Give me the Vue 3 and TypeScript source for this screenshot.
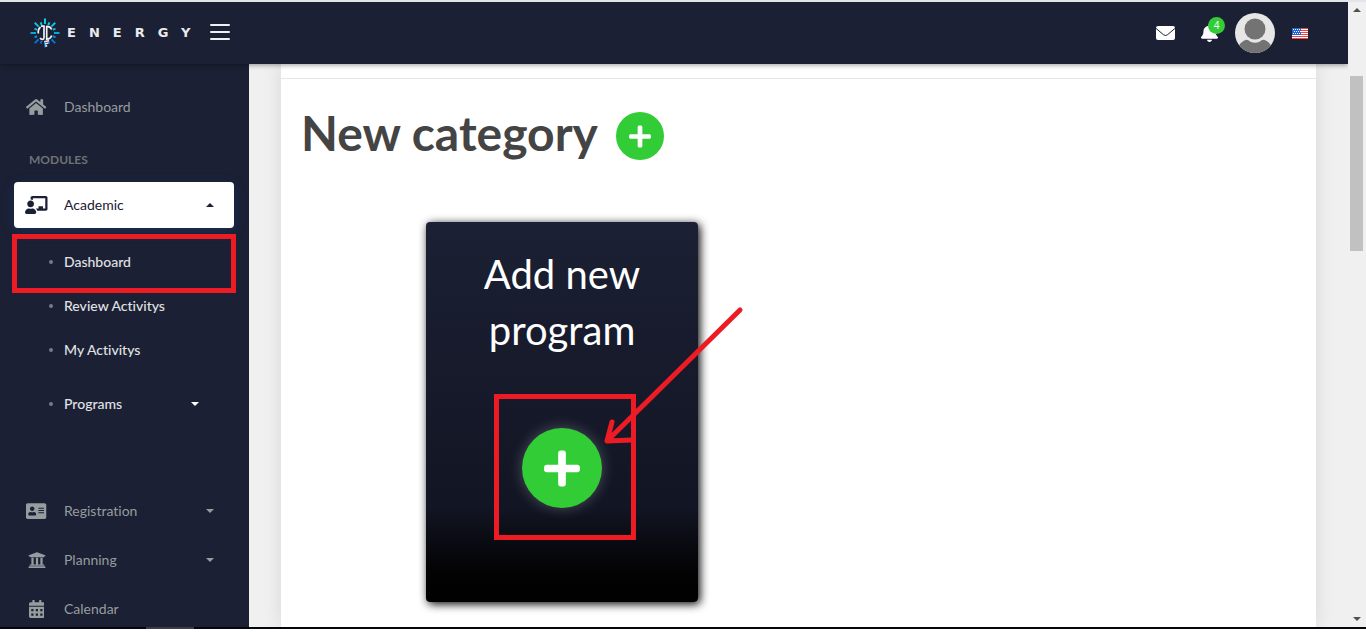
<script setup lang="ts">
interface NavItem {
  label: string
  icon: string
  box: string
  size: number
  arrow?: boolean
}

const icons = {
  home: 'M280.37 148.26L96 300.11V464a16 16 0 0 0 16 16l112.06-.29a16 16 0 0 0 15.92-16V368a16 16 0 0 1 16-16h64a16 16 0 0 1 16 16v95.64a16 16 0 0 0 16 16.05L464 480a16 16 0 0 0 16-16V300L295.67 148.26a12.19 12.19 0 0 0-15.3 0zM571.6 251.47L488 182.56V44.05a12 12 0 0 0-12-12h-56a12 12 0 0 0-12 12v72.61L318.47 43a48 48 0 0 0-61 0L4.34 251.47a12 12 0 0 0-1.6 16.9l25.5 31A12 12 0 0 0 45.15 301l235.22-193.74a12.19 12.19 0 0 1 15.3 0L530.9 301a12 12 0 0 0 16.9-1.6l25.5-31a12 12 0 0 0-1.7-16.93z',
  teacher: 'M208 352c-2.39 0-4.78.35-7.06 1.09C187.98 357.3 174.35 360 160 360c-14.35 0-27.98-2.7-40.95-6.91-2.28-.74-4.66-1.09-7.05-1.09C49.94 352-.33 402.48 0 464.62.14 490.88 21.73 512 48 512h224c26.27 0 47.86-21.12 48-47.38.33-62.14-49.94-112.62-112-112.62zm-48-32c53.02 0 96-42.98 96-96s-42.98-96-96-96-96 42.98-96 96 42.98 96 96 96zM592 0H208c-26.47 0-48 22.25-48 49.59V96c23.42 0 45.1 6.78 64 17.8V64h352v288h-64v-64H384v64h-76.24c19.1 16.69 33.12 38.73 39.69 64H592c26.47 0 48-22.25 48-49.59V49.59C640 22.25 618.47 0 592 0z',
  card: 'M528 32H48C21.5 32 0 53.5 0 80v352c0 26.5 21.5 48 48 48h480c26.5 0 48-21.5 48-48V80c0-26.5-21.5-48-48-48zm-352 96c35.3 0 64 28.7 64 64s-28.7 64-64 64-64-28.7-64-64 28.7-64 64-64zm112 236.8c0 10.6-10 19.2-22.4 19.2H86.4C74 384 64 375.4 64 364.8v-19.2c0-31.8 30.1-57.6 67.2-57.6h5c12.3 5.1 25.7 8 39.8 8s27.6-2.9 39.8-8h5c37.1 0 67.2 25.8 67.2 57.6v19.2zM512 312c0 4.4-3.6 8-8 8H360c-4.4 0-8-3.6-8-8v-16c0-4.4 3.6-8 8-8h144c4.4 0 8 3.6 8 8v16zm0-64c0 4.4-3.6 8-8 8H360c-4.4 0-8-3.6-8-8v-16c0-4.4 3.6-8 8-8h144c4.4 0 8 3.6 8 8v16zm0-64c0 4.4-3.6 8-8 8H360c-4.4 0-8-3.6-8-8v-16c0-4.4 3.6-8 8-8h144c4.4 0 8 3.6 8 8v16z',
  bank: 'M496 128v16a8 8 0 0 1-8 8h-24v12c0 6.627-5.373 12-12 12H60c-6.627 0-12-5.373-12-12v-12H24a8 8 0 0 1-8-8v-16a8 8 0 0 1 4.941-7.392l232-88a7.996 7.996 0 0 1 6.118 0l232 88A8 8 0 0 1 496 128zm-24 304H40c-13.255 0-24 10.745-24 24v16a8 8 0 0 0 8 8h464a8 8 0 0 0 8-8v-16c0-13.255-10.745-24-24-24zM96 192v192H60c-6.627 0-12 5.373-12 12v20h416v-20c0-6.627-5.373-12-12-12h-36V192h-64v192h-64V192h-64v192h-64V192H96z',
  calendar: 'M0 464c0 26.5 21.5 48 48 48h352c26.5 0 48-21.5 48-48V192H0v272zM320 256h64v64h-64zM320 384h64v64h-64zM192 256h64v64h-64zM192 384h64v64h-64zM64 256h64v64H64zM64 384h64v64H64zM400 64h-48V16c0-8.8-7.2-16-16-16h-32c-8.8 0-16 7.2-16 16v48H160V16c0-8.8-7.2-16-16-16h-32c-8.8 0-16 7.2-16 16v48H48C21.5 64 0 85.5 0 112v48h448v-48c0-26.5-21.5-48-48-48z',
  bell: 'M224 512c35.32 0 63.97-28.65 63.97-64H160.03c0 35.35 28.65 64 63.97 64zm215.39-149.71c-19.32-20.76-55.47-51.99-55.47-154.29 0-77.7-54.48-139.9-127.94-155.16V32c0-17.67-14.32-32-31.98-32s-31.98 14.33-31.98 32v20.84C118.56 68.1 64.08 130.3 64.08 208c0 102.3-36.15 133.53-55.47 154.29-6 6.45-8.66 14.16-8.61 21.71.11 16.4 12.98 32 32.1 32h383.8c19.12 0 32-15.6 32.1-32 .05-7.55-2.61-15.27-8.61-21.71z',
  plus: 'M416 208H272V64c0-17.67-14.33-32-32-32h-32c-17.67 0-32 14.33-32 32v144H32c-17.67 0-32 14.33-32 32v32c0 17.67 14.33 32 32 32h144v144c0 17.67 14.33 32 32 32h32c17.67 0 32-14.33 32-32V304h144c17.67 0 32-14.33 32-32v-32c0-17.67-14.33-32-32-32z',
}

const subItems: string[] = ['Dashboard', 'Review Activitys', 'My Activitys']

const lowerItems: NavItem[] = [
  { label: 'Registration', icon: icons.card, box: '0 0 576 512', size: 18, arrow: true },
  { label: 'Planning', icon: icons.bank, box: '0 0 512 512', size: 18, arrow: true },
  { label: 'Calendar', icon: icons.calendar, box: '0 0 448 512', size: 18 },
]

const rays: number[] = Array.from({ length: 16 }, (_, i) => i * 22.5)
</script>

<template>
  <div class="window">
    <div class="viewport">
      <div class="page">
        <header class="topbar">
          <a class="brand" href="#">
            <svg class="brand-mark" viewBox="0 0 30 30" aria-hidden="true">
              <defs>
                <linearGradient id="ray" gradientUnits="userSpaceOnUse" x1="0" y1="0" x2="0" y2="29">
                  <stop offset="0" stop-color="#08dbe6" />
                  <stop offset="0.5" stop-color="#0aa6dc" />
                  <stop offset="1" stop-color="#0b4fc0" />
                </linearGradient>
              </defs>
              <mask id="burst">
                <path
                  v-for="(angle, i) in rays"
                  :key="angle"
                  :d="i % 2 ? 'M15 6.4V3.6' : 'M15 6V0.5'"
                  :transform="`rotate(${angle} 15 15)`"
                  stroke="#fff"
                  stroke-width="2"
                />
              </mask>
              <rect width="30" height="30" fill="url(#ray)" mask="url(#burst)" />
              <path d="M11 8.200h3V19.500c0 2.400-2.600 2.600-4 .6M10.500 9Q7.600 11.500 8.400 15.500M16.700 7.800V22M16.700 8.400c2.600.2 4.300 1.200 5 3.100M16.700 21.200c2.600-.2 4.300-1.400 5-3.700" fill="none" stroke="#eef2f5" stroke-width="1.700" />
              <path d="M14.200 23.800l4.800-1.200M14.800 26l3.600-1M15.200 28.200l2-.6" stroke="#dfe4ea" stroke-width="1.700" />
            </svg>
            <span class="wordmark">ENERGY</span>
          </a>
          <button class="burger" type="button" aria-label="Toggle menu"><i></i><i></i><i></i></button>
          <div class="tools">
            <button class="tool mail" type="button" aria-label="Messages">
              <svg width="19" height="14" viewBox="0 0 19 14">
                <rect width="19" height="14" rx="2" fill="#fff" />
                <path d="M0 2.400l7.600 6.400q1.900 1.400 3.800 0L19 2.400" fill="none" stroke="#1b2034" stroke-width="1" />
              </svg>
            </button>
            <button class="tool bell" type="button" aria-label="Notifications">
              <svg width="17" height="18" viewBox="0 0 448 512" preserveAspectRatio="none"><path :d="icons.bell" fill="#fff" /></svg>
              <span class="badge">4</span>
            </button>
            <button class="tool avatar" type="button" aria-label="Profile">
              <svg width="40" height="40" viewBox="0 0 40 40">
                <clipPath id="disc"><circle cx="20" cy="20" r="20" /></clipPath>
                <g clip-path="url(#disc)">
                  <rect width="40" height="40" fill="#e6e6e6" />
                  <circle cx="20" cy="16" r="10.5" fill="#737373" />
                  <path d="M2 40c0-6 3-11 9-13.2q2.400-.2 4 1.600q5 2.600 10 0q1.600-1.800 4-1.600C35 29 38 34 38 40z" fill="#737373" />
                </g>
              </svg>
            </button>
            <button class="tool flag" type="button" aria-label="Language">
              <svg width="16" height="11" viewBox="0 0 16 11">
                <rect width="16" height="11" fill="#fff" />
                <path d="M0 .5h16M0 2.500h16M0 4.500h16M0 6.500h16M0 8.500h16M0 10.500h16" stroke="#f0433f" stroke-width="1" />
                <rect width="9" height="7" fill="#2563d8" />
                <path d="M1 1.500h8M2 3.500h7M1 5.500h8" stroke="#fff" stroke-width="1" stroke-dasharray="1 1" />
              </svg>
            </button>
          </div>
        </header>

        <div class="body">
          <nav class="sidebar">
            <a class="item" href="#">
              <span class="icon"><svg height="18" viewBox="0 0 576 512"><path :d="icons.home" /></svg></span>
              <span>Dashboard</span>
            </a>
            <p class="section">MODULES</p>
            <a class="item active" href="#">
              <span class="icon"><svg height="18" viewBox="0 0 640 512"><path :d="icons.teacher" /></svg></span>
              <span>Academic</span>
              <span class="caret up"></span>
            </a>
            <ul class="sub">
              <li v-for="(label, i) in subItems" :key="label">
                <a class="sub-item" href="#">{{ label }}</a>
                <span v-if="i === 0" class="mark nav-mark"></span>
              </li>
              <li class="nested">
                <a class="sub-item" href="#">Programs<span class="caret"></span></a>
              </li>
            </ul>
            <a v-for="item in lowerItems" :key="item.label" class="item" href="#">
              <span class="icon"><svg :height="item.size" :viewBox="item.box"><path :d="item.icon" fill-rule="evenodd" /></svg></span>
              <span>{{ item.label }}</span>
              <span v-if="item.arrow" class="caret"></span>
            </a>
          </nav>

          <main class="content">
            <section class="panel">
              <div class="panel-top"></div>
              <div class="title-row">
                <h1>New category</h1>
                <button class="round" type="button" aria-label="Add category">
                  <svg width="22" height="25" viewBox="0 0 448 512"><path :d="icons.plus" fill="#fff" /></svg>
                </button>
              </div>
              <article class="program">
                <h2>Add new program</h2>
                <button class="round large" type="button" aria-label="Add program">
                  <svg width="36" height="41" viewBox="0 0 448 512"><path :d="icons.plus" fill="#fff" /></svg>
                </button>
                <span class="mark card-mark"></span>
                <svg class="arrow" width="144" height="144" viewBox="0 0 144 144" aria-hidden="true">
                  <path d="M139 8L7 138M11 120L6 139L31 138" />
                </svg>
              </article>
            </section>
          </main>
        </div>
      </div>
      <div class="scrollbar">
        <span class="tip top"></span>
        <span class="thumb"></span>
        <span class="tip bottom"></span>
      </div>
    </div>
    <div class="taskline"><span></span></div>
  </div>
</template>

<style>
body {
  margin: 0;
  background: #fff;
}
</style>

<style scoped>
.window {
  box-sizing: border-box;
  height: 100vh;
  padding-bottom: 3px;
  display: flex;
  flex-direction: column;
  font-family: Lato, "Liberation Sans", sans-serif;
  font-variant-ligatures: none;
  overflow: hidden;
}
.viewport {
  flex: 1;
  min-height: 0;
  display: flex;
  border-top: 2px solid #e3e5ea;
}
.page {
  flex: 1;
  min-width: 0;
  display: flex;
  flex-direction: column;
  overflow: hidden;
}
button {
  margin: 0;
  padding: 0;
  border: 0;
  background: none;
  cursor: pointer;
}
svg {
  display: block;
}
a {
  color: inherit;
  text-decoration: none;
}
.topbar {
  flex: none;
  position: relative;
  z-index: 2;
  height: 62px;
  box-sizing: border-box;
  padding: 0 40px 0 30px;
  display: flex;
  align-items: center;
  background: #1b2034;
  box-shadow: 0 1px 5px rgba(0, 0, 0, 0.4);
}
.brand {
  display: flex;
  align-items: center;
  gap: 7px;
  width: 180px;
}
.brand-mark {
  width: 30px;
  height: 30px;
  flex: none;
}
.wordmark {
  font-family: "DejaVu Sans", sans-serif;
  font-size: 13px;
  line-height: 20px;
  font-weight: 700;
  letter-spacing: 13px;
  color: #e9ebee;
}
.burger {
  display: flex;
  flex-direction: column;
  gap: 5px;
  width: 20px;
  padding-bottom: 2px;
}
.burger i {
  height: 2px;
  border-radius: 1px;
  background: #f0f1f3;
}
.tools {
  margin-left: auto;
  display: flex;
  align-items: center;
}
.bell {
  position: relative;
  margin-left: 26px;
}
.badge {
  position: absolute;
  left: 7px;
  top: -7px;
  width: 17px;
  height: 17px;
  border-radius: 50%;
  background: #32cd36;
  color: #fff;
  font: 10px/17px "Open Sans", sans-serif;
  text-align: center;
}
.avatar {
  margin-left: 17px;
}
.flag {
  margin-left: 17px;
}
.body {
  flex: 1;
  min-height: 0;
  display: flex;
}
.sidebar {
  flex: none;
  width: 249px;
  box-sizing: border-box;
  padding: 20px 15px 0 14px;
  background: #1b2034;
  color: #979c9f;
  font-size: 14px;
  line-height: 20px;
  overflow: hidden;
}
.item {
  height: 46px;
  margin-bottom: 3px;
  display: flex;
  align-items: center;
  border-radius: 4px;
}
.icon {
  width: 45px;
  margin-right: 5px;
  display: flex;
  justify-content: center;
}
.icon svg {
  fill: currentColor;
}
.caret {
  margin-left: auto;
  margin-right: 20px;
  border: 4px solid transparent;
  border-top-color: currentColor;
  border-bottom: 0;
}
.caret.up {
  border-top: 0;
  border-bottom: 4px solid currentColor;
}
.section {
  margin: 0;
  padding: 17px 15px 12px;
  font-size: 12px;
  line-height: 20px;
  font-weight: 700;
  color: #6f7276;
}
.item.active {
  margin-bottom: 0;
  background: #fff;
  color: #1b2034;
  box-shadow: 0 3px 12px rgba(20, 70, 130, 0.4);
}
.sub {
  list-style: none;
  margin: 0 0 62px;
  padding: 12px 0 0;
  color: #e1e2e5;
}
.sub li {
  position: relative;
}
.sub-item {
  height: 44px;
  display: flex;
  align-items: center;
  padding-right: 15px;
  font-weight: 500;
}
.sub-item::before {
  content: "";
  width: 4px;
  height: 4px;
  margin: 0 11px 0 35px;
  border-radius: 50%;
  background: #777b85;
}
.nested {
  margin-top: 10px;
}
.nested .caret {
  color: #fff;
}
.mark {
  position: absolute;
  box-sizing: border-box;
  border: 5px solid #ed1c24;
  pointer-events: none;
}
.nav-mark {
  inset: -6px -2px -9px;
}
.content {
  flex: 1;
  min-width: 0;
  display: flex;
  padding: 0 32px;
  background: #f0f0f0;
}
.panel {
  flex: 1;
  min-width: 0;
  background: #fff;
  box-shadow: 0 0 18px rgba(0, 0, 0, 0.1);
}
.panel-top {
  height: 14px;
  border-bottom: 1px solid #e6e6e6;
}
.title-row {
  display: flex;
  align-items: center;
  gap: 18px;
  padding: 33px 20px 0;
}
h1 {
  margin: -6px 0 0;
  font-size: 48px;
  line-height: 48px;
  font-weight: 700;
  color: #444;
}
.round {
  width: 48px;
  height: 48px;
  border-radius: 50%;
  background: #32cd36;
  display: flex;
  align-items: center;
  justify-content: center;
}
.program {
  position: relative;
  box-sizing: border-box;
  width: 272px;
  height: 380px;
  margin: 62px 0 0 145px;
  padding: 24px 40px 0;
  display: flex;
  flex-direction: column;
  align-items: center;
  border-radius: 4px;
  background: linear-gradient(#1b2034, #121523 75%, #030304 92%, #000);
  box-shadow: 2px 2px 10px #000;
}
h2 {
  margin: 0 0 70px;
  font-size: 40px;
  line-height: 56px;
  font-weight: 400;
  text-align: center;
  color: #fff;
}
.round.large {
  width: 80px;
  height: 80px;
  box-shadow: 0 0 14px rgba(255, 255, 255, 0.25);
}
.card-mark {
  left: 68px;
  top: 172px;
  width: 142px;
  height: 146px;
}
.arrow {
  position: absolute;
  left: 175px;
  top: 80px;
  fill: none;
  stroke: #ed1c24;
  stroke-width: 5px;
  stroke-linecap: round;
  stroke-linejoin: round;
  pointer-events: none;
}
.scrollbar {
  flex: none;
  width: 18px;
  box-sizing: border-box;
  padding: 6px 3px 6px 2px;
  display: flex;
  flex-direction: column;
  align-items: center;
  background: #f0f0f0;
}
.thumb {
  width: 13px;
  height: 175px;
  margin-top: 64px;
  background: #c1c1c1;
}
.tip {
  border: 4px solid transparent;
}
.tip.top {
  border-top: 0;
  border-bottom-color: #505050;
}
.tip.bottom {
  margin-top: auto;
  border-bottom: 0;
  border-top-color: #505050;
}
.taskline {
  flex: none;
  height: 2px;
  padding-left: 146px;
  background: #04060c;
}
.taskline span {
  display: block;
  width: 48px;
  height: 2px;
  background: #3a3d42;
}
</style>
